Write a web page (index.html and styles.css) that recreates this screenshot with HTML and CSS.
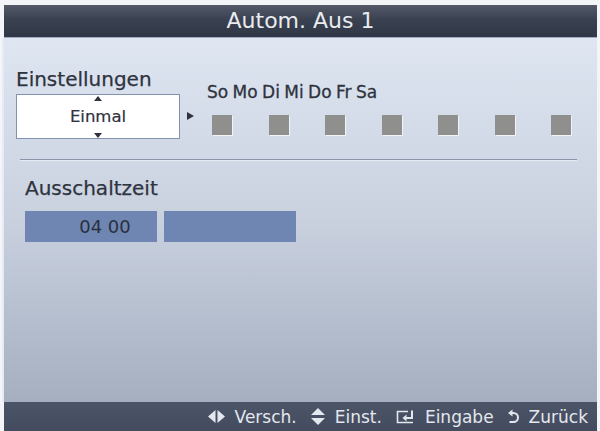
FILE: index.html
```html
<!DOCTYPE html>
<html lang="de">
<head>
    <meta charset="UTF-8">
    <meta name="viewport" content="width=device-width, initial-scale=1.0">
    <title>Autom. Aus 1</title>
    <link rel="stylesheet" href="styles.css">
</head>
<body>
    <div class="screen">
        <div class="title-bar">Autom. Aus 1</div>

        <div class="content">
            <div class="settings">
                <div class="mode">
                    <div class="label">Einstellungen</div>
                    <div class="mode-box">
                        <span class="arrow-up"></span>
                        Einmal
                        <span class="arrow-down"></span>
                    </div>
                </div>
                <div class="days">
                    <div class="day-names">So Mo Di Mi Do Fr Sa</div>
                    <div class="day-row">
                        <span class="pointer"></span>
                        <div class="day-boxes">
                            <span class="day"></span>
                            <span class="day"></span>
                            <span class="day"></span>
                            <span class="day"></span>
                            <span class="day"></span>
                            <span class="day"></span>
                            <span class="day"></span>
                        </div>
                    </div>
                </div>
            </div>

            <div class="separator"></div>

            <div class="off-time">
                <div class="label">Ausschaltzeit</div>
                <div class="time-fields">
                    <div class="time-field">04 00</div>
                    <div class="time-field"></div>
                </div>
            </div>
        </div>

        <div class="footer">
            <span class="hint">
                <svg width="17" height="15" viewBox="0 0 17 15" fill="currentColor"><polygon points="0,7.5 7.5,1 7.5,14"/><polygon points="9.5,1 17,7.5 9.5,14"/></svg>
                Versch.
            </span>
            <span class="hint">
                <svg width="14" height="17" viewBox="0 0 14 17" fill="currentColor"><polygon points="7,0 14,7 0,7"/><polygon points="0,10 14,10 7,17"/></svg>
                Einst.
            </span>
            <span class="hint">
                <svg width="19" height="14" viewBox="0 0 19 14" fill="none" stroke="currentColor">
                    <path d="M12 1.5H1.5v11h15.5" stroke-width="1.6"/>
                    <path d="M16 0.5v7.5H10" stroke-width="2"/>
                    <polygon points="6.5,8 10.5,4.5 10.5,11.5" fill="currentColor" stroke="none"/>
                </svg>
                Eingabe
            </span>
            <span class="hint">
                <svg width="11" height="15" viewBox="0 0 11 15" fill="none" stroke="currentColor">
                    <path d="M3 4h2.5a4.5 4.5 0 0 1 0 9H1.5" stroke-width="2"/>
                    <polygon points="0,4 4.5,0.5 4.5,7.5" fill="currentColor" stroke="none"/>
                </svg>
                Zurück
            </span>
        </div>
    </div>
</body>
</html>
```

FILE: styles.css
```css
* {
    box-sizing: border-box;
}

body {
    margin: 0;
    background: #f4f5f8;
    font-family: "DejaVu Sans", sans-serif;
    color: #2e333e;
}

.screen {
    margin: 5px 3px 0 4px;
    height: 426px;
    display: flex;
    flex-direction: column;
}

.title-bar {
    height: 33px;
    line-height: 32px;
    text-align: center;
    font-size: 22px;
    color: #e9ebef;
    background: linear-gradient(#545a68, #3a4151 45%, #2f3645);
    border-bottom: 1px solid #9eabc4;
}

.content {
    flex: 1;
    padding-top: 29px;
    background: linear-gradient(#dfe6f2, #c9d1df 50%, #a5afc0);
    border-left: 2px solid #e7ecf4;
    margin-left: -2px;
}

.label {
    font-size: 20px;
    line-height: 24px;
    -webkit-text-stroke: 0.25px #2e333e;
}

/* top block: mode selector and weekday boxes */
.settings {
    display: flex;
    padding-left: 12px;
}

.mode {
    width: 164px;
}

.mode-box {
    position: relative;
    margin-top: 3px;
    height: 45px;
    line-height: 43px;
    text-align: center;
    font-size: 16.5px;
    background: #fff;
    border: 1px solid #8492b2;
    -webkit-text-stroke: 0.2px #2e333e;
}

.arrow-up,
.arrow-down {
    position: absolute;
    left: 50%;
    margin-left: -4px;
    width: 0;
    height: 0;
    border-left: 4px solid transparent;
    border-right: 4px solid transparent;
}

.arrow-up {
    top: 1px;
    border-bottom: 5px solid #2e333e;
}

.arrow-down {
    bottom: 0;
    border-top: 5px solid #2e333e;
}

.days {
    margin-left: 7px;
    padding-top: 15px;
}

.day-names {
    padding-left: 20px;
    font-size: 17px;
    line-height: 20px;
    word-spacing: -1px;
    -webkit-text-stroke: 0.3px #2e333e;
}

.day-row {
    display: flex;
    margin-top: 13px;
}

.pointer {
    margin-top: -3px;
    width: 0;
    height: 0;
    border-top: 4px solid transparent;
    border-bottom: 4px solid transparent;
    border-left: 7px solid #2e333e;
}

.day-boxes {
    display: flex;
    justify-content: space-between;
    width: 359px;
    margin-left: 18px;
}

.day {
    width: 20px;
    height: 20px;
    background: #8f8f8e;
    box-shadow: 1px 1px 0 #f2f4f8;
}

.separator {
    margin: 20px 20px 0 16px;
    height: 2px;
    border-top: 1px solid #8b95a9;
    border-bottom: 1px solid #e6ebf3;
}

/* switch-off time */
.off-time {
    margin-top: 15px;
    padding-left: 21px;
}

.time-fields {
    display: flex;
    gap: 7px;
    margin-top: 11px;
}

.time-field {
    width: 132px;
    height: 31px;
    line-height: 31px;
    padding-left: 28px;
    text-align: center;
    font-size: 18px;
    color: #28303f;
    background: #6f86b2;
}

.footer {
    height: 29px;
    display: flex;
    justify-content: flex-end;
    align-items: center;
    gap: 14px;
    padding-right: 9px;
    font-size: 17px;
    color: #e4e7ee;
    background: linear-gradient(#4c5468, #434b5e);
}

.hint {
    display: flex;
    align-items: center;
    gap: 10px;
}
```
